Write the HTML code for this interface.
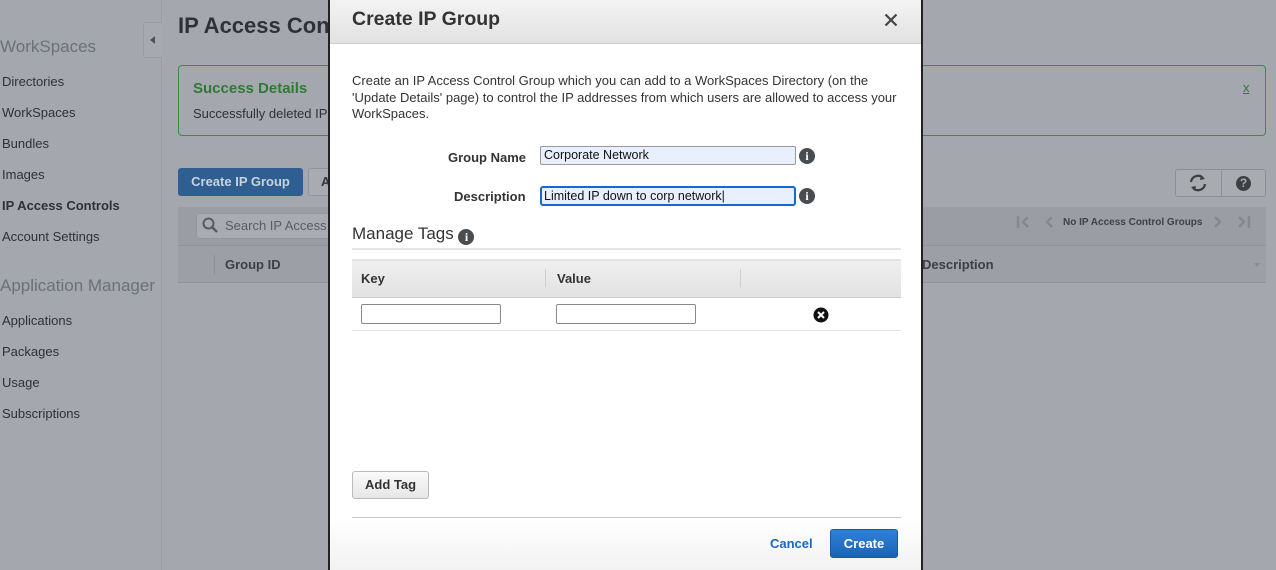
<!DOCTYPE html>
<html><head><style>
*{margin:0;padding:0;box-sizing:border-box}
body{width:1276px;height:570px;overflow:hidden;background:#a4a8ae;font-family:"Liberation Sans",Arial,sans-serif;position:relative;color:#33373b}
.a{position:absolute}
.nav{font-size:13px;color:#2e3236;left:2px}
.sec{font-size:17px;color:#6c7177;left:0}
.b{font-weight:bold}
.info{display:inline-block;width:16px;height:16px;border-radius:50%;background:#4a4d50;color:#fff;font:bold 12px/16px "Liberation Serif",serif;text-align:center;font-style:normal}
</style></head><body>
<div class="a sec" style="top:37px">WorkSpaces</div>
<div class="a nav" style="top:74px">Directories</div>
<div class="a nav" style="top:105px">WorkSpaces</div>
<div class="a nav" style="top:136px">Bundles</div>
<div class="a nav" style="top:167px">Images</div>
<div class="a nav b" style="top:198px">IP Access Controls</div>
<div class="a nav" style="top:229px">Account Settings</div>
<div class="a sec" style="top:276px">Application Manager</div>
<div class="a nav" style="top:313px">Applications</div>
<div class="a nav" style="top:344px">Packages</div>
<div class="a nav" style="top:375px">Usage</div>
<div class="a nav" style="top:406px">Subscriptions</div>
<div class="a" style="left:161px;top:0;width:1px;height:570px;background:#999ea4"></div>
<div class="a" style="left:143px;top:22px;width:19px;height:36px;border:1px solid #989ca2;border-right:none;border-radius:3px 0 0 3px;background:#a6aab0"><div class="a" style="left:6px;top:13px;border:4px solid transparent;border-right:5px solid #4e5257;border-left:none"></div></div>
<div class="a b" style="left:178px;top:13px;font-size:22px;color:#2e3236">IP Access Con</div>
<div class="a" style="left:178px;top:65px;width:1088px;height:71px;border:1px solid #3d8a45;border-radius:4px"></div>
<div class="a b" style="left:193px;top:80px;font-size:15px;color:#2f7a37">Success Details</div>
<div class="a" style="left:193px;top:106px;font-size:13px;color:#2e3236">Successfully deleted IP</div>
<div class="a" style="left:1243px;top:80px;font-size:13px;color:#2f7a37;text-decoration:underline">x</div>
<div class="a b" style="left:178px;top:168px;width:125px;height:28px;background:#2f5f92;border-radius:3px;color:#c8d2dc;font-size:13px;line-height:28px;text-align:center">Create IP Group</div>
<div class="a" style="left:308px;top:168px;width:30px;height:28px;border:1px solid #90949a;border-radius:3px;background:#a8acb1;font:bold 13px/26px 'Liberation Sans';padding-left:12px">A</div>
<div class="a" style="left:178px;top:207px;width:1088px;height:38px;background:#9a9ea4"></div>
<div class="a" style="left:196px;top:213px;width:140px;height:26px;background:#a8acb1;border:1px solid #94989e;border-radius:3px;font-size:13px;color:#5a5e63;line-height:24px;padding-left:28px">Search IP Access</div>
<svg class="a" style="left:202px;top:217px" width="16" height="16"><circle cx="6.5" cy="6.5" r="5" fill="none" stroke="#585c61" stroke-width="2"/><path d="M10 10l5 5" stroke="#585c61" stroke-width="2.5"/></svg>
<div class="a" style="left:178px;top:245px;width:1088px;height:38px;background:#9ca0a6;border-top:1px solid #90949a;border-bottom:1px solid #90949a"></div>
<div class="a" style="left:214px;top:255px;width:1px;height:20px;background:#8c9096"></div>
<div class="a b" style="left:225px;top:257px;font-size:13px;color:#3c4045">Group ID</div>
<div class="a b" style="left:922px;top:257px;font-size:13px;color:#3c4045">Description</div>
<div class="a" style="left:1254px;top:263px;border:3px solid transparent;border-top:4px solid #8a8e94"></div>
<div class="a" style="left:1175px;top:169px;width:91px;height:28px;border:1px solid #8c9096;border-radius:3px;background:#a8acb1"></div>
<div class="a" style="left:1221px;top:169px;width:1px;height:28px;background:#8c9096"></div>
<svg class="a" style="left:1188px;top:174px" width="20" height="18"><path d="M3 8a7 7 0 0 1 12-4" fill="none" stroke="#3c4045" stroke-width="2.2"/><path d="M17 10a7 7 0 0 1-12 4" fill="none" stroke="#3c4045" stroke-width="2.2"/><path d="M13 1l4 4-5 1z" fill="#3c4045"/><path d="M7 17l-4-4 5-1z" fill="#3c4045"/></svg>
<div class="a b" style="left:1236px;top:176px;width:15px;height:15px;border-radius:50%;background:#3c4045;color:#a8acb1;font-size:12px;line-height:15px;text-align:center">?</div>
<svg class="a" style="left:1016px;top:215px" width="42" height="14"><path d="M2 1v12" stroke="#85898f" stroke-width="2.5"/><path d="M12 2l-5 5 5 5M36 2l-5 5 5 5" fill="none" stroke="#85898f" stroke-width="2.5"/></svg>
<div class="a b" style="left:1063px;top:217px;font-size:10px;color:#3e4247">No IP Access Control Groups</div>
<svg class="a" style="left:1212px;top:215px" width="42" height="14"><path d="M3 2l5 5-5 5M27 2l5 5-5 5" fill="none" stroke="#85898f" stroke-width="2.5"/><path d="M37 1v12" stroke="#85898f" stroke-width="2.5"/></svg>
<!-- modal -->
<div class="a" style="left:328px;top:0;width:595px;height:570px;background:#fff;border-left:2px solid #222;border-right:2px solid #222"></div>
<div class="a" style="left:330px;top:0;width:591px;height:44px;background:linear-gradient(#f3f3f3,#e2e2e2);border-bottom:1px solid #cfcfcf"></div>
<div class="a b" style="left:352px;top:8px;font-size:19.5px;color:#333">Create IP Group</div>
<svg class="a" style="left:884px;top:13px" width="14" height="14"><path d="M1.5 1.5L12.5 12.5M12.5 1.5L1.5 12.5" stroke="#444" stroke-width="2.2"/></svg>
<div class="a" style="left:352px;top:73px;width:550px;font-size:13px;line-height:16.5px;color:#333">Create an IP Access Control Group which you can add to a WorkSpaces Directory (on the 'Update Details' page) to control the IP addresses from which users are allowed to access your WorkSpaces.</div>
<div class="a b" style="left:448px;top:150px;font-size:13px;color:#333">Group Name</div>
<div class="a" style="left:540px;top:146px;width:256px;height:19px;background:#e8f0fe;border:1px solid #999;border-radius:2px;font-size:12.5px;line-height:17px;padding-left:3px;color:#111">Corporate Network</div>
<i class="a info" style="left:799px;top:148px">i</i>
<div class="a b" style="left:454px;top:189px;font-size:13px;color:#333">Description</div>
<div class="a" style="left:540px;top:186px;width:256px;height:20px;background:#e8f0fe;border:2px solid #1a66d0;border-radius:3px;font-size:12.5px;line-height:16px;padding-left:2px;color:#111">Limited IP down to corp network|</div>
<i class="a info" style="left:799px;top:188px">i</i>
<div class="a" style="left:352px;top:224px;font-size:17px;color:#333">Manage Tags <i class="info" style="vertical-align:-2px">i</i></div>
<div class="a" style="left:352px;top:248px;width:549px;height:2px;background:#e4e4e4"></div>
<div class="a" style="left:352px;top:259px;width:549px;height:39px;background:linear-gradient(#efefef,#e2e2e2);border-top:2px solid #e4e4e4;border-bottom:1px solid #ccc"></div>
<div class="a" style="left:545px;top:269px;width:1px;height:18px;background:#d0d0d0"></div>
<div class="a" style="left:740px;top:269px;width:1px;height:18px;background:#d0d0d0"></div>
<div class="a b" style="left:361px;top:271px;font-size:13px;color:#333">Key</div>
<div class="a b" style="left:557px;top:271px;font-size:13px;color:#333">Value</div>
<div class="a" style="left:361px;top:304px;width:140px;height:20px;border:1px solid #888;border-radius:2px"></div>
<div class="a" style="left:556px;top:304px;width:140px;height:20px;border:1px solid #888;border-radius:2px"></div>
<svg class="a" style="left:813px;top:307px" width="16" height="16"><circle cx="8" cy="8" r="7.5" fill="#111"/><path d="M5 5l6 6M11 5l-6 6" stroke="#fff" stroke-width="2"/></svg>
<div class="a" style="left:352px;top:330px;width:549px;height:1px;background:#e4e4e4"></div>
<div class="a b" style="left:352px;top:471px;width:77px;height:28px;border:1px solid #bbb;border-radius:3px;background:linear-gradient(#fafafa,#e6e6e6);font-size:13px;line-height:26px;text-align:center;color:#333">Add Tag</div>
<div class="a" style="left:352px;top:517px;width:549px;height:1px;background:#c8c8c8"></div>
<div class="a" style="left:330px;top:518px;width:591px;height:52px;background:linear-gradient(#fff,#f2f2f2)"></div>
<div class="a b" style="left:770px;top:536px;font-size:13px;color:#1a66c0">Cancel</div>
<div class="a b" style="left:830px;top:529px;width:68px;height:29px;background:linear-gradient(#2f82d6,#1a62b8);border:1px solid #1659a8;border-radius:3px;font-size:13px;line-height:27px;text-align:center;color:#fff">Create</div>
</body></html>
